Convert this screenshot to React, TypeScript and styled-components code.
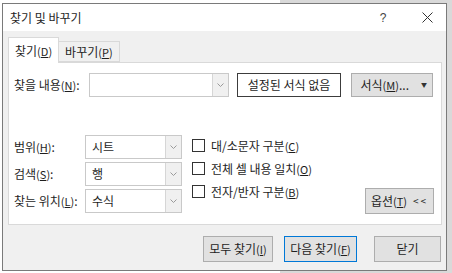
import React from 'react';
import styled, { createGlobalStyle } from 'styled-components';

const GlobalStyle = createGlobalStyle`
  html, body {
    margin: 0;
    padding: 0;
  }
  body {
    width: 452px;
    height: 273px;
    overflow: hidden;
    background: linear-gradient(to right, #ffffff 280px, #d9d9d9 280px);
    font-family: 'Noto Sans CJK KR', 'Noto Sans', sans-serif;
    font-size: 12px;
    color: #1e1e1e;
  }
`;

const Dialog = styled.div`
  position: relative;
  margin: 3px 0 0 2px;
  width: 445px;
  height: 268px;
  box-sizing: border-box;
  border: 1px solid #7a7a7a;
  background: #f0f0f0;
  display: flex;
  flex-direction: column;
`;

const TitleBar = styled.div`
  height: 27px;
  flex-shrink: 0;
  background: #fff;
  display: flex;
  align-items: center;
  padding-left: 7px;
`;

const Title = styled.span`
  flex: 1;
  font-size: 12px;
  line-height: 14px;
`;

const TitleButton = styled.div<{ $width: number }>`
  width: ${({ $width }) => $width}px;
  height: 27px;
  display: flex;
  align-items: center;
  justify-content: center;
  color: #444;
  font-size: 12px;
  font-family: 'Liberation Sans', sans-serif;
`;

const Body = styled.div`
  flex: 1;
  display: flex;
  flex-direction: column;
  padding: 6px 5px 0 5px;
`;

const Tabs = styled.div`
  display: flex;
  align-items: flex-end;
  height: 25px;
`;

const Tab = styled.div<{ $active?: boolean }>`
  box-sizing: border-box;
  height: ${({ $active }) => ($active ? '26px' : '21px')};
  margin-bottom: ${({ $active }) => ($active ? '-1px' : '0')};
  padding: 0 6px;
  background: ${({ $active }) => ($active ? '#fff' : '#f0f0f0')};
  border: 1px solid #d9d9d9;
  border-bottom: ${({ $active }) => ($active ? 'none' : '1px solid #d9d9d9')};
  border-left: ${({ $active }) => ($active ? '1px solid #d9d9d9' : 'none')};
  display: flex;
  align-items: center;
  position: relative;
  z-index: 1;
  line-height: 14px;
`;

const Panel = styled.div`
  box-sizing: border-box;
  width: 434px;
  height: 163px;
  background: #fff;
  border: 1px solid #d9d9d9;
  padding: 10px 7px 0 5px;
  display: flex;
  flex-direction: column;
`;

const Mn = styled.span`
  font-size: 11px;
  & u {
    text-decoration: underline;
    text-underline-offset: 1px;
  }
`;

const FindRow = styled.div`
  display: flex;
  align-items: center;
  height: 24px;
`;

const Label = styled.div<{ $width: number }>`
  width: ${({ $width }) => $width}px;
  flex-shrink: 0;
  line-height: 14px;
  white-space: nowrap;
`;

const Combo = styled.div<{ $width: number }>`
  box-sizing: border-box;
  width: ${({ $width }) => $width}px;
  height: 24px;
  border: 1px solid #c9c9c9;
  background: #fff;
  display: flex;
`;

const ComboText = styled.div`
  flex: 1;
  padding-left: 6px;
  display: flex;
  align-items: center;
  line-height: 14px;
`;

const ComboArrow = styled.div`
  width: 15px;
  border-left: 1px solid #d6d6d6;
  background: #f0f0f0;
  display: flex;
  align-items: center;
  justify-content: center;
`;

const FormatPreview = styled.div`
  box-sizing: border-box;
  margin-left: 8px;
  width: 104px;
  height: 24px;
  border: 1px solid #3c3c3c;
  background: #fff;
  display: flex;
  align-items: center;
  justify-content: center;
  line-height: 14px;
`;

const Button = styled.div<{ $width: number; $height?: number; $primary?: boolean }>`
  box-sizing: border-box;
  width: ${({ $width }) => $width}px;
  height: ${({ $height }) => $height ?? 26}px;
  background: #e1e1e1;
  border: 1px solid ${({ $primary }) => ($primary ? '#0078d7' : '#adadad')};
  display: flex;
  align-items: center;
  justify-content: center;
  line-height: 14px;
  white-space: nowrap;
`;

const FormatButton = styled(Button)`
  margin-left: 10px;
  justify-content: flex-end;
  padding-right: 5px;
  gap: 12px;
`;

const Caret = styled.span`
  font-size: 6px;
  color: #333;
`;

const Lower = styled.div`
  margin-top: 38px;
  display: flex;
`;

const SelectGrid = styled.div`
  display: grid;
  grid-template-columns: 71px 97px;
  grid-auto-rows: 24px;
  row-gap: 3px;
  align-items: center;
`;

const CheckList = styled.div`
  margin-left: 10px;
  padding-top: 4px;
  display: flex;
  flex-direction: column;
`;

const CheckRow = styled.div`
  height: 23px;
  display: flex;
  align-items: flex-start;
  gap: 6px;
  line-height: 13px;
`;

const Box = styled.div`
  box-sizing: border-box;
  width: 13px;
  height: 13px;
  border: 1px solid #333;
  background: #fff;
  flex-shrink: 0;
`;

const Spacer = styled.div`
  flex: 1;
`;

const OptionsButton = styled(Button)`
  align-self: flex-end;
  margin-bottom: -1px;
  gap: 6px;
`;

const Arrows = styled.span`
  font-size: 10px;
  letter-spacing: 2px;
`;

const Footer = styled.div`
  display: flex;
  justify-content: flex-end;
  margin-top: 11px;
`;

const FooterGap = styled.div<{ $w: number }>`
  width: ${({ $w }) => $w}px;
`;

const Chevron = () => (
  <svg width="7" height="4" viewBox="0 0 7 4">
    <path d="M0.5 0.5 L3.5 3.5 L6.5 0.5" fill="none" stroke="#9a9a9a" strokeWidth="1" />
  </svg>
);

const CloseIcon = () => (
  <svg width="11" height="11" viewBox="0 0 11 11">
    <path d="M0.5 0.5 L10.5 10.5 M10.5 0.5 L0.5 10.5" stroke="#333" strokeWidth="1" />
  </svg>
);

const M = ({ k }: { k: string }) => (
  <Mn>
    (<u>{k}</u>)
  </Mn>
);

const Select = ({ value, width }: { value?: string; width: number }) => (
  <Combo $width={width}>
    <ComboText>{value}</ComboText>
    <ComboArrow>
      <Chevron />
    </ComboArrow>
  </Combo>
);

const App = () => {
  const checks = [
    { text: '대/소문자 구분', key: 'C' },
    { text: '전체 셀 내용 일치', key: 'O' },
    { text: '전자/반자 구분', key: 'B' },
  ];
  const selects = [
    { label: '범위', key: 'H', value: '시트' },
    { label: '검색', key: 'S', value: '행' },
    { label: '찾는 위치', key: 'L', value: '수식' },
  ];

  return (
    <>
      <GlobalStyle />
      <Dialog>
        <TitleBar>
          <Title>찾기 및 바꾸기</Title>
          <TitleButton $width={50}>?</TitleButton>
          <TitleButton $width={38}>
            <CloseIcon />
          </TitleButton>
        </TitleBar>
        <Body>
          <Tabs>
            <Tab $active>
              찾기<M k="D" />
            </Tab>
            <Tab>
              바꾸기<M k="P" />
            </Tab>
          </Tabs>
          <Panel>
            <FindRow>
              <Label $width={75}>
                찾을 내용<M k="N" />:
              </Label>
              <Select width={140} />
              <FormatPreview>설정된 서식 없음</FormatPreview>
              <FormatButton $width={82} $height={24}>
                <span>
                  서식<M k="M" />...
                </span>
                <Caret>▼</Caret>
              </FormatButton>
            </FindRow>
            <Lower>
              <SelectGrid>
                {selects.map((s) => (
                  <React.Fragment key={s.key}>
                    <Label $width={71}>
                      {s.label}
                      <M k={s.key} />:
                    </Label>
                    <Select width={97} value={s.value} />
                  </React.Fragment>
                ))}
              </SelectGrid>
              <CheckList>
                {checks.map((c) => (
                  <CheckRow key={c.key}>
                    <Box />
                    <span>
                      {c.text}
                      <M k={c.key} />
                    </span>
                  </CheckRow>
                ))}
              </CheckList>
              <Spacer />
              <OptionsButton $width={69}>
                <span>
                  옵션<M k="T" />
                </span>
                <Arrows>&lt;&lt;</Arrows>
              </OptionsButton>
            </Lower>
          </Panel>
          <Footer>
            <Button $width={70}>
              모두 찾기<M k="I" />
            </Button>
            <FooterGap $w={11} />
            <Button $width={73} $primary>
              다음 찾기<M k="F" />
            </Button>
            <FooterGap $w={17} />
            <Button $width={67}>닫기</Button>
          </Footer>
        </Body>
      </Dialog>
    </>
  );
};

export default App;
